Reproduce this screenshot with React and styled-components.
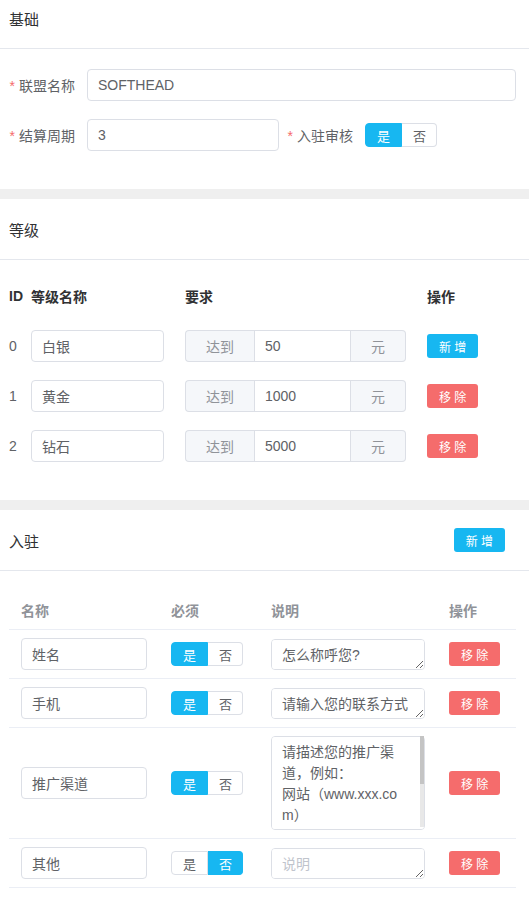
import React from 'react'
import styled, { createGlobalStyle } from 'styled-components'

const levels = [
    { id: 0, name: '白银', amount: '50' },
    { id: 1, name: '黄金', amount: '1000' },
    { id: 2, name: '钻石', amount: '5000' },
]

const entries = [
    { name: '姓名', required: true, desc: '怎么称呼您?' },
    { name: '手机', required: true, desc: '请输入您的联系方式' },
    { name: '推广渠道', required: true, desc: '请描述您的推广渠道，例如：\n网站（www.xxx.com）', tall: true },
    { name: '其他', required: false, desc: '' },
]

function YesNo({ value }) {
    return (
        <RadioGroup>
            <RadioBtn $active={value}>是</RadioBtn>
            <RadioBtn $active={!value}>否</RadioBtn>
        </RadioGroup>
    )
}

function App() {
    return (
        <>
            <GlobalStyle />
            <Page>
                <Card>
                    <CardHeader>基础</CardHeader>
                    <CardBody>
                        <FormRow>
                            <FormItem $grow>
                                <Label>联盟名称</Label>
                                <TextInput defaultValue="SOFTHEAD" />
                            </FormItem>
                        </FormRow>
                        <FormRow>
                            <FormItem>
                                <Label>结算周期</Label>
                                <TextInput $w={192} defaultValue="3" />
                            </FormItem>
                            <FormItem>
                                <Label>入驻审核</Label>
                                <YesNo value={true} />
                            </FormItem>
                        </FormRow>
                    </CardBody>
                </Card>

                <Card>
                    <CardHeader>等级</CardHeader>
                    <CardBody $bottom={38}>
                        <LevelGrid>
                            <HeadText>ID</HeadText>
                            <HeadText>等级名称</HeadText>
                            <HeadText>要求</HeadText>
                            <HeadText>操作</HeadText>
                            {levels.map((lv, i) => (
                                <React.Fragment key={lv.id}>
                                    <span>{lv.id}</span>
                                    <TextInput $w={133} defaultValue={lv.name} />
                                    <InputGroup>
                                        <Addon $side="left">达到</Addon>
                                        <GroupInput defaultValue={lv.amount} />
                                        <Addon $side="right">元</Addon>
                                    </InputGroup>
                                    <div>
                                        {i === 0
                                            ? <Button>新 增</Button>
                                            : <Button $danger>移 除</Button>}
                                    </div>
                                </React.Fragment>
                            ))}
                        </LevelGrid>
                    </CardBody>
                </Card>

                <Card>
                    <CardHeader>
                        入驻
                        <Button>新 增</Button>
                    </CardHeader>
                    <CardBody>
                        <EntryTable>
                            <HeadCell>名称</HeadCell>
                            <HeadCell>必须</HeadCell>
                            <HeadCell>说明</HeadCell>
                            <HeadCell>操作</HeadCell>
                            {entries.map((e) => (
                                <React.Fragment key={e.name}>
                                    <Cell><TextInput defaultValue={e.name} /></Cell>
                                    <Cell><YesNo value={e.required} /></Cell>
                                    <Cell>
                                        <AreaWrap>
                                            <TextArea $tall={e.tall} defaultValue={e.desc} placeholder="说明" />
                                            {e.tall && <ScrollTrack><ScrollThumb /></ScrollTrack>}
                                        </AreaWrap>
                                    </Cell>
                                    <Cell><Button $danger>移 除</Button></Cell>
                                </React.Fragment>
                            ))}
                        </EntryTable>
                    </CardBody>
                </Card>
            </Page>
        </>
    )
}

export default App

const blue = '#17b7f1'
const red = '#f56c6c'

const GlobalStyle = createGlobalStyle`
    html, body {
        margin: 0;
        padding: 0;
        background: #efefef;
        overflow: hidden;
    }
    body {
        font-family: "Liberation Sans", "Noto Sans CJK SC", sans-serif;
        font-size: 14px;
        color: #606266;
    }
    * { box-sizing: border-box; }
`

// page is scrolled a little, first header is cut at the top
const Page = styled.div`
    margin-top: -12px;
    display: flex;
    flex-direction: column;
    gap: 10px;
`

const Card = styled.section`
    background: #fff;
`

const CardHeader = styled.div`
    height: 61px;
    display: flex;
    align-items: center;
    justify-content: space-between;
    padding: 0 24px 0 9px;
    border-bottom: 1px solid #e4e7ed;
    font-size: 15px;
    color: #303133;
`

const CardBody = styled.div`
    padding: 20px 13px ${p => p.$bottom || 20}px 9px;
`

const FormRow = styled.div`
    display: flex;
    align-items: center;
    gap: 8px;
    height: 32px;
    margin-bottom: 18px;
`

const FormItem = styled.div`
    display: flex;
    align-items: center;
    flex: ${p => p.$grow ? 1 : 'none'};
`

const Label = styled.label`
    width: 78px;
    flex: none;
    padding-right: 12px;
    text-align: right;
    color: #606266;
    &::before {
        content: '*';
        color: ${red};
        margin-right: 4px;
    }
`

const TextInput = styled.input`
    height: 32px;
    width: ${p => p.$w ? p.$w + 'px' : '100%'};
    flex: ${p => p.$w ? 'none' : 1};
    border: 1px solid #dcdfe6;
    border-radius: 4px;
    padding: 0 10px;
    font-family: inherit;
    font-size: 14px;
    color: #606266;
    background: #fff;
    outline: none;
`

const RadioGroup = styled.div`
    display: inline-flex;
    height: 24px;
`

const RadioBtn = styled.span`
    display: flex;
    align-items: center;
    padding: 0 11px;
    font-size: 13px;
    border: 1px solid ${p => p.$active ? blue : '#dcdfe6'};
    background: ${p => p.$active ? blue : '#fff'};
    color: ${p => p.$active ? '#fff' : '#606266'};
    &:first-child {
        border-radius: 4px 0 0 4px;
    }
    &:last-child {
        border-radius: 0 4px 4px 0;
        border-left: 0;
        padding-right: 10px;
    }
`

const Button = styled.button`
    height: 24px;
    padding: 0 12px;
    border: 0;
    border-radius: 3px;
    font-family: inherit;
    font-size: 12px;
    color: #fff;
    background: ${p => p.$danger ? red : blue};
    cursor: pointer;
`

const LevelGrid = styled.div`
    display: grid;
    grid-template-columns: 22px 154px 242px 1fr;
    grid-auto-rows: 32px;
    row-gap: 18px;
    align-items: center;
`

const HeadText = styled.span`
    font-weight: bold;
    color: #303133;
`

const InputGroup = styled.div`
    display: flex;
    width: 221px;
    height: 32px;
`

const Addon = styled.span`
    display: flex;
    align-items: center;
    padding: 0 20px;
    background: #f5f7fa;
    color: #909399;
    border: 1px solid #dcdfe6;
    border-radius: ${p => p.$side === 'left' ? '4px 0 0 4px' : '0 4px 4px 0'};
    ${p => p.$side === 'left' ? 'border-right: 0;' : 'border-left: 0;'}
`

const GroupInput = styled(TextInput)`
    flex: 1;
    width: 0;
    border-radius: 0;
`

const EntryTable = styled.div`
    display: grid;
    grid-template-columns: 150px 100px 178px 1fr;
`

const HeadCell = styled.div`
    height: 39px;
    padding: 0 12px;
    display: flex;
    align-items: center;
    border-bottom: 1px solid #ebeef5;
    font-weight: bold;
    color: #909399;
`

const Cell = styled.div`
    padding: 8px 12px;
    display: flex;
    align-items: center;
    border-bottom: 1px solid #ebeef5;
`

const AreaWrap = styled.div`
    position: relative;
    width: 100%;
`

const TextArea = styled.textarea`
    display: block;
    width: 100%;
    height: ${p => p.$tall ? 94 : 31}px;
    padding: 5px 15px 5px 10px;
    border: 1px solid #dcdfe6;
    border-radius: 4px;
    font-family: inherit;
    font-size: 14px;
    line-height: 1.5;
    color: #606266;
    word-break: break-all;
    resize: ${p => p.$tall ? 'none' : 'vertical'};
    outline: none;
    &::placeholder {
        color: #c0c4cc;
    }
`

/* the textarea's own scrollbar, which the headless browser does not paint */
const ScrollTrack = styled.div`
    position: absolute;
    top: 0;
    right: 1px;
    bottom: 3px;
    width: 4px;
    background: #e8e8e8;
`

const ScrollThumb = styled.div`
    height: 48px;
    background: #c4c4c4;
`
